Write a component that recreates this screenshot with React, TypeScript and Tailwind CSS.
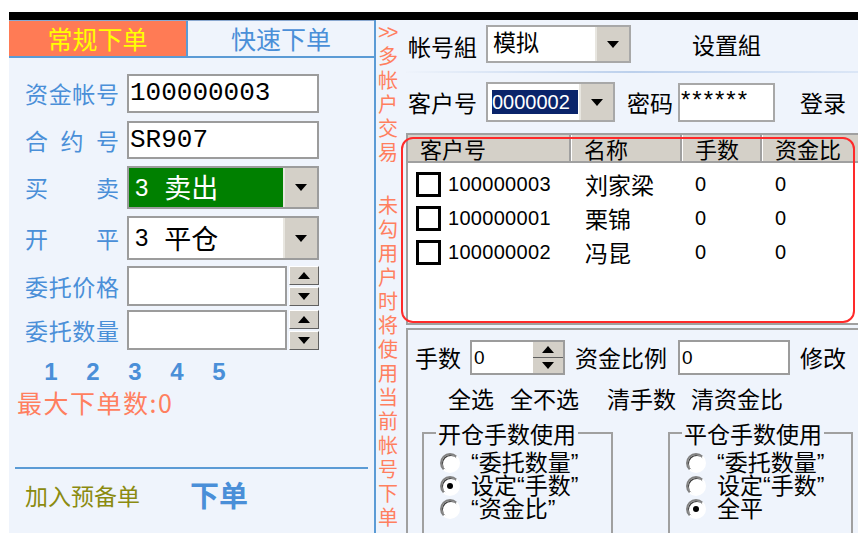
import React from "react";

const CJK = "font-['Noto_Sans_CJK_SC',sans-serif]";
const LATIN = "font-['Liberation_Sans','Noto_Sans_CJK_SC',sans-serif]";
const MONO = "font-['Liberation_Mono','Noto_Sans_CJK_SC',monospace]";

function DownTri() {
  return (
    <svg width="12" height="7" viewBox="0 0 12 7">
      <path d="M0 0h12L6 7z" fill="#000" />
    </svg>
  );
}

function UpTri() {
  return (
    <svg width="12" height="7" viewBox="0 0 12 7">
      <path d="M0 7h12L6 0z" fill="#000" />
    </svg>
  );
}

function DropBtn({ w = "w-[34px]" }: { w?: string }) {
  return (
    <div
      className={`${w} h-full shrink-0 flex items-center justify-center bg-[#d4d0c8] border-l-2 border-l-[#e8e6e0]`}
    >
      <DownTri />
    </div>
  );
}

function Spinner() {
  return (
    <div className="w-[30px] h-full flex flex-col gap-[2px]">
      <div className="flex-1 flex items-center justify-center bg-[#d4d0c8] border border-t-white border-l-white border-b-[#606060] border-r-[#606060]">
        <UpTri />
      </div>
      <div className="flex-1 flex items-center justify-center bg-[#d4d0c8] border border-t-white border-l-white border-b-[#606060] border-r-[#606060]">
        <DownTri />
      </div>
    </div>
  );
}

function Label({ chars }: { chars: string[] }) {
  return (
    <div className="w-[94px] mr-[8px] flex justify-between text-[23px] text-[#4a8fd8]">
      {chars.map((c, i) => (
        <span key={i}>{c}</span>
      ))}
    </div>
  );
}

function LeftPanel() {
  return (
    <div className={`w-[367px] shrink-0 flex flex-col border-r-2 border-[#5b9bd5] ${CJK}`}>
      {/* 页签 */}
      <div className="h-[38px] flex border-t border-[#8aa8d0] border-b-2 border-b-[#5b9bd5]">
        <div className="w-[179px] bg-[#ff7b55] text-[#ffff00] text-[25px] flex items-center justify-center border-r-2 border-[#5b9bd5]">
          常规下单
        </div>
        <div className="flex-1 text-[#4a8fd8] text-[25px] flex items-center justify-center">
          快速下单
        </div>
      </div>

      <div className="pl-[16px] pt-[16px] flex flex-col">
        <div className="flex items-center h-[39px]">
          <Label chars={["资", "金", "帐", "号"]} />
          <div className={`w-[192px] h-full bg-white border-2 border-[#9c9c9c] flex items-center pl-[1px] text-[26px] text-black ${MONO}`}>
            100000003
          </div>
        </div>
        <div className="flex items-center h-[38px] mt-[8px]">
          <Label chars={["合", "约", "号"]} />
          <div className={`w-[192px] h-full bg-white border-2 border-[#9c9c9c] flex items-center pl-[1px] text-[26px] text-black ${MONO}`}>
            SR907
          </div>
        </div>
        <div className="flex items-center h-[43px] mt-[7px]">
          <Label chars={["买", "卖"]} />
          <div className="w-[192px] h-full border-2 border-[#9c9c9c] flex bg-[#008000]">
            <div className="flex-1 flex items-center pl-[6px] text-white">
              <span className={`text-[24px] ${LATIN}`}>3</span>
              <span className="text-[27px] ml-[16px]">卖出</span>
            </div>
            <DropBtn />
          </div>
        </div>
        <div className="flex items-center h-[44px] mt-[7px]">
          <Label chars={["开", "平"]} />
          <div className="w-[192px] h-full border-2 border-[#9c9c9c] flex bg-white">
            <div className="flex-1 flex items-center pl-[6px] text-black">
              <span className={`text-[24px] ${LATIN}`}>3</span>
              <span className="text-[27px] ml-[16px]">平仓</span>
            </div>
            <DropBtn />
          </div>
        </div>
        <div className="flex items-center h-[40px] mt-[6px]">
          <Label chars={["委", "托", "价", "格"]} />
          <div className="w-[160px] h-full bg-white border-2 border-[#9c9c9c]" />
          <div className="ml-[2px] h-full">
            <Spinner />
          </div>
        </div>
        <div className="flex items-center h-[40px] mt-[4px]">
          <Label chars={["委", "托", "数", "量"]} />
          <div className="w-[160px] h-full bg-white border-2 border-[#9c9c9c]" />
          <div className="ml-[2px] h-full">
            <Spinner />
          </div>
        </div>
      </div>

      {/* 快捷数量 */}
      <div className={`flex pl-[21px] mt-[10px] h-[24px] items-center text-[24px] font-bold text-[#4a8fd8] ${LATIN}`}>
        {["1", "2", "3", "4", "5"].map((n) => (
          <span key={n} className="w-[42px] text-center">
            {n}
          </span>
        ))}
      </div>
      <div className="mt-[5px] h-[28px] pl-[8px] flex items-center text-[25px] tracking-[1.5px] text-[#ff7f5f]">
        最大下单数:0
      </div>

      <div className="mt-[50px] mx-[6px] h-[2px] bg-[#5b9bd5]" />
      <div className="mt-[6px] h-[40px] flex items-center pl-[16px]">
        <span className="text-[23px] text-[#8b8b10]">加入预备单</span>
        <span className="ml-[50px] text-[29px] font-bold text-[#4a8fd8]">下单</span>
      </div>
    </div>
  );
}

function VerticalNote() {
  const top = ["多", "帐", "户", "交", "易"];
  const bottom = "未勾用户时将使用当前帐号下单".split("");
  return (
    <div className={`w-[30px] shrink-0 flex flex-col items-start pl-[2px] text-[20px] leading-[24px] text-[#ff7f5f] ${CJK}`}>
      <span className={`h-[24px] text-[20px] tracking-[-3px] ${LATIN}`}>&gt;&gt;</span>
      {top.map((c, i) => (
        <span key={`t${i}`} className="h-[24px]">
          {c}
        </span>
      ))}
      <div className="h-[29px]" />
      {bottom.map((c, i) => (
        <span key={`b${i}`} className="h-[24px]">
          {c}
        </span>
      ))}
    </div>
  );
}

const accounts = [
  { id: "100000003", name: "刘家梁", hands: "0", ratio: "0" },
  { id: "100000001", name: "栗锦", hands: "0", ratio: "0" },
  { id: "100000002", name: "冯昆", hands: "0", ratio: "0" },
];

function Radio({ checked }: { checked?: boolean }) {
  return (
    <div className="w-[20px] h-[20px] shrink-0 rounded-full border-2 border-t-[#808080] border-l-[#808080] border-b-white border-r-white bg-white flex items-center justify-center shadow-[inset_1px_1px_0_#404040]">
      {checked && <div className="w-[6px] h-[6px] rounded-full bg-black" />}
    </div>
  );
}

function Group({
  title,
  items,
  className,
}: {
  title: string;
  items: { label: string; checked?: boolean }[];
  className: string;
}) {
  return (
    <fieldset className={`border-2 border-[#a0a0a0] h-[120px] ${className}`}>
      <legend className="ml-[12px] px-[2px] text-[23px] leading-[26px]">{title}</legend>
      <div className="pt-[5px] flex flex-col">
        {items.map((it) => (
          <div key={it.label} className="h-[23px] flex items-center pl-[16px]">
            <Radio checked={it.checked} />
            <span className={`ml-[11px] text-[23px] leading-[22px] whitespace-nowrap ${LATIN}`}>{it.label}</span>
          </div>
        ))}
      </div>
    </fieldset>
  );
}

function RightPanel() {
  return (
    <div className={`relative flex-1 flex flex-col text-black ${CJK}`}>
      {/* 帐号组 */}
      <div className="h-[38px] mt-[5px] flex items-center pl-[2px]">
        <span className="w-[78px] text-[23px] pt-[4px]">帐号組</span>
        <div className="w-[145px] h-full bg-white border-2 border-[#a8a8a8] flex">
          <div className="flex-1 pl-[5px] pt-[1px] text-[23px] leading-[26px]">模拟</div>
          <DropBtn />
        </div>
        <span className="ml-[61px] text-[23px]">设置組</span>
      </div>
      <div className="mt-[8px] h-[2px] bg-gradient-to-r from-[#eef3fb] via-[#bcd0ec] to-[#dbe6f6]" />

      {/* 客户号 */}
      <div className="h-[40px] mt-[9px] flex items-center pl-[2px]">
        <span className="w-[78px] text-[23px]">客户号</span>
        <div className="w-[129px] h-full bg-white border-2 border-[#a8a8a8] flex">
          <div className="flex-1 flex items-center pl-[4px]">
            <span className={`w-[86px] h-[24px] overflow-hidden whitespace-nowrap bg-[#0a246a] text-white text-[20px] leading-[24px] ${LATIN}`}>
              0000002
            </span>
          </div>
          <DropBtn />
        </div>
        <span className="ml-[12px] w-[51px] text-[23px]">密码</span>
        <div className={`w-[97px] h-[39px] bg-white border-2 border-[#a8a8a8] pl-[1px] pt-[5px] text-[24px] leading-[20px] tracking-[2px] ${LATIN}`}>
          ******
        </div>
        <span className="ml-[25px] text-[23px]">登录</span>
      </div>

      {/* 客户列表 */}
      <div className="mt-[11px] h-[192px] border-l-2 border-t-2 border-b-2 border-[#a0a0a0] bg-white flex flex-col">
        <div className="h-[28px] flex bg-[#d4d0c8] border-b-2 border-[#a0a0a0] text-[22px] leading-[26px]">
          <div className="w-[163px] pl-[12px] border-r-2 border-[#a0a0a0]">客户号</div>
          <div className="w-[111px] pl-[12px] border-r-2 border-l border-l-white border-[#a0a0a0]">名称</div>
          <div className="w-[80px] pl-[12px] border-r-2 border-l border-l-white border-[#a0a0a0]">手数</div>
          <div className="flex-1 pl-[12px] border-l border-l-white">资金比</div>
        </div>
        <div className="pt-[4px] flex flex-col">
          {accounts.map((a) => (
            <div key={a.id} className="h-[34px] flex items-center">
              <div className="w-[163px] flex items-center pl-[8px]">
                <div className="w-[25px] h-[25px] border-[3px] border-black bg-white" />
                <span className={`ml-[7px] text-[20px] tracking-[0.3px] ${LATIN}`}>{a.id}</span>
              </div>
              <div className="w-[111px] pl-[14px] text-[23px]">{a.name}</div>
              <div className={`w-[80px] pl-[13px] text-[20px] ${LATIN}`}>{a.hands}</div>
              <div className={`flex-1 pl-[13px] text-[20px] ${LATIN}`}>{a.ratio}</div>
            </div>
          ))}
        </div>
      </div>

      {/* 批量设置 */}
      <div className="mt-[3px] flex-1 border-l-2 border-t-2 border-[#a0a0a0] overflow-hidden flex flex-col">
        <div className="mt-[10px] h-[35px] flex items-center pl-[7px]">
          <span className="w-[55px] text-[23px]">手数</span>
          <div className="w-[95px] h-full bg-white border-2 border-[#9c9c9c] flex">
            <span className={`flex-1 pl-[2px] text-[19px] leading-[31px] ${LATIN}`}>0</span>
            <div className="w-[30px] h-full flex flex-col bg-[#d4d0c8]">
              <div className="flex-1 flex items-center justify-center border-b border-[#606060]">
                <UpTri />
              </div>
              <div className="flex-1 flex items-center justify-center">
                <DownTri />
              </div>
            </div>
          </div>
          <span className="ml-[10px] w-[103px] text-[23px]">资金比例</span>
          <div className={`w-[112px] h-full bg-white border-2 border-[#9c9c9c] pl-[2px] text-[19px] leading-[31px] ${LATIN}`}>
            0
          </div>
          <span className="ml-[10px] text-[23px]">修改</span>
        </div>
        <div className="mt-[9px] h-[28px] flex items-center pl-[40px] text-[23px]">
          <span>全选</span>
          <span className="ml-[16px]">全不选</span>
          <span className="ml-[28px]">清手数</span>
          <span className="ml-[15px]">清资金比</span>
        </div>
        <div className="mt-[8px] flex pl-[14px]">
          <Group
            className="w-[191px]"
            title="开仓手数使用"
            items={[
              { label: "“委托数量”" },
              { label: "设定“手数”", checked: true },
              { label: "“资金比”" },
            ]}
          />
          <Group
            className="ml-[55px] w-[185px]"
            title="平仓手数使用"
            items={[
              { label: "“委托数量”" },
              { label: "设定“手数”" },
              { label: "全平", checked: true },
            ]}
          />
        </div>
      </div>

      {/* 红色标注框 */}
      <div className="absolute left-[-5px] top-[117px] w-[454px] h-[186px] border-2 border-[#ff2a2a] rounded-[12px] pointer-events-none" />
    </div>
  );
}

export default function App() {
  return (
    <div className="w-[858px] h-[533px] bg-white pl-[9px] pt-[12px] overflow-hidden">
      <div className="h-[8px] bg-black" />
      <div className="h-[513px] flex bg-[#eff4fc]">
        <LeftPanel />
        <VerticalNote />
        <RightPanel />
      </div>
    </div>
  );
}
